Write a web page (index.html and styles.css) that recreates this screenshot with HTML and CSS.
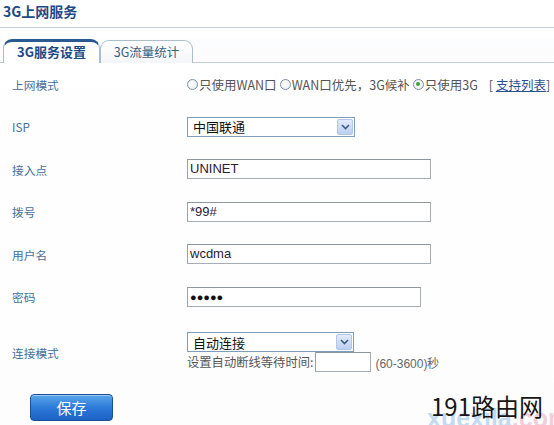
FILE: index.html
```html
<!DOCTYPE html>
<html lang="zh-CN">
<head>
<meta charset="utf-8">
<title>3G上网服务</title>
<link rel="stylesheet" href="styles.css">
</head>
<body>
<div class="page">
  <div class="title">3G上网服务</div>
  <div class="tabs">
    <div class="tab active">3G服务设置</div>
    <div class="tab">3G流量统计</div>
  </div>
  <div class="form">
    <div class="row">
      <div class="label">上网模式</div>
      <div class="ctrl radios">
        <span class="radio"></span><span class="rtext">只使用WAN口</span>
        <span class="radio"></span><span class="rtext">WAN口优先，3G候补</span>
        <span class="radio checked"></span><span class="rtext">只使用3G</span>
        <span class="bracket">[ <a class="link">支持列表</a>]</span>
      </div>
    </div>
    <div class="row">
      <div class="label">ISP</div>
      <div class="ctrl"><div class="select isp"><span class="stext">中国联通</span><span class="arrow"><svg width="9" height="6" viewBox="0 0 9 6"><path d="M1 1 L4.5 4.5 L8 1" fill="none" stroke="#3e5a8a" stroke-width="1.6"/></svg></span></div></div>
    </div>
    <div class="row">
      <div class="label">接入点</div>
      <div class="ctrl"><div class="input wide">UNINET</div></div>
    </div>
    <div class="row">
      <div class="label">拨号</div>
      <div class="ctrl"><div class="input wide">*99#</div></div>
    </div>
    <div class="row">
      <div class="label">用户名</div>
      <div class="ctrl"><div class="input wide">wcdma</div></div>
    </div>
    <div class="row">
      <div class="label">密码</div>
      <div class="ctrl"><div class="input pwd"><span class="dots">●●●●●</span></div></div>
    </div>
    <div class="row conn">
      <div class="label">连接模式</div>
      <div class="ctrl stack">
        <div class="select mode"><span class="stext">自动连接</span><span class="arrow"><svg width="9" height="6" viewBox="0 0 9 6"><path d="M1 1 L4.5 4.5 L8 1" fill="none" stroke="#3e5a8a" stroke-width="1.6"/></svg></span></div>
        <div class="wait"><span>设置自动断线等待时间:</span><div class="input small"></div><span class="range">(60-3600)秒</span></div>
      </div>
    </div>
  </div>
  <div class="actions"><button class="save">保存</button></div>
  <div class="watermark"><span class="wm-faint"><span class="wm-blue">xuexila</span><span class="wm-pink">.com</span></span><span class="wm-main">191路由网</span></div>
</div>
</body>
</html>
```
FILE: styles.css
```css
* { box-sizing: border-box; }
html, body { margin: 0; padding: 0; background: #fff; }
body {
  font-family: "Noto Sans CJK SC", "Liberation Sans", sans-serif;
  font-size: 12px;
  color: #333;
}
.page {
  position: relative;
  width: 554px;
  height: 425px;
  overflow: hidden;
  background: linear-gradient(#ffffff, #fdfdfe);
}
.title {
  height: 28px;
  padding-left: 3px;
  line-height: 22px;
  font-size: 14px;
  font-weight: bold;
  color: #1f4a86;
  border-bottom: 1px solid #c3cfd0;
}
.tabs {
  margin-top: 11px;
  height: 24px;
  padding-left: 3px;
  display: flex;
  align-items: flex-end;
  border-bottom: 1px solid #bfcfd4;
  background: linear-gradient(#fbfdff, #fefcfc);
}
.tab {
  height: 23px;
  width: 93px;
  margin-bottom: -1px;
  border: 1px solid #a9bfcc;
  border-bottom: none;
  border-radius: 9px 9px 0 0;
  background: linear-gradient(#ffffff, #f3f6f9);
  text-align: center;
  font-size: 12.5px;
  line-height: 22px;
  color: #3b5d80;
}
.tab.active {
  width: 97px;
  height: 24px;
  border-top: 3px solid #2a5890;
  font-weight: bold;
  font-size: 13px;
  line-height: 20px;
  color: #1d4a86;
  background: #fff;
}
.form { display: flex; flex-direction: column; }
.row {
  display: grid;
  grid-template-columns: 187px 1fr;
  align-items: center;
  height: 42.5px;
}
.label {
  padding-left: 12px;
  color: #46709a;
  font-size: 11.7px;
}
.ctrl { display: flex; align-items: center; }
.radios { font-size: 12.5px; color: #555; white-space: nowrap; }
.radio {
  display: inline-block;
  width: 11px;
  height: 11px;
  border: 1px solid #7b8fa2;
  border-radius: 50%;
  background: radial-gradient(circle at 40% 40%, #ffffff, #e4e9ee);
  margin-right: 1px;
  position: relative;
}
.radio.checked::after {
  content: "";
  position: absolute;
  left: 2.5px;
  top: 2.5px;
  width: 4px;
  height: 4px;
  border-radius: 50%;
  background: #3da13d;
}
.rtext { margin-right: 3px; }
.bracket { margin-left: 8px; color: #555; }
.link { color: #2a4f8e; text-decoration: underline; }
.select {
  height: 20px;
  border: 1px solid #7f9db9;
  display: flex;
  align-items: center;
  justify-content: space-between;
  padding: 1px 1px 1px 5px;
  background: #fff;
  font-size: 13px;
  color: #111;
}
.select.isp { width: 168px; }
.select.mode { width: 167px; }
.arrow {
  width: 16px;
  height: 16px;
  border: 1px solid #b4c6e6;
  border-radius: 2px;
  background: linear-gradient(#e2ebfa, #bccff0);
  display: flex;
  align-items: center;
  justify-content: center;
}
.input {
  height: 20px;
  border: 1px solid #a5acb2;
  border-top-color: #8f969c;
  border-left-color: #9aa1a7;
  background: #fff;
  font-family: "Liberation Sans", Arial, sans-serif;
  font-size: 13px;
  line-height: 18px;
  padding-left: 2px;
  color: #2c2030;
}
.input.wide { width: 244px; }
.input.pwd { width: 234px; }
.input.small { width: 56px; margin: 0 4px 0 2px; }
.dots { font-size: 11px; letter-spacing: 0px; color: #111; }
.row.conn { height: 54px; padding-top: 14px; align-items: center; }
.stack { flex-direction: column; align-items: flex-start; }
.wait { display: flex; align-items: center; color: #555; font-size: 12.3px; height: 20px; }
.range { font-family: "Liberation Sans", Arial, sans-serif; font-size: 12px; color: #666; }
.actions { margin-top: 22px; padding-left: 30px; }
.save {
  width: 83px;
  height: 27px;
  border: 1px solid #1c4f97;
  border-radius: 4px;
  background: linear-gradient(#5aa6ec 0%, #2d7ad9 50%, #1b62c4 100%);
  color: #fff;
  font-family: "Noto Sans CJK SC", sans-serif;
  font-size: 15px;
  line-height: 23px;
  padding: 0;
  box-shadow: inset 0 1px 0 rgba(255,255,255,0.4);
}
.watermark {
  position: absolute;
  left: 431px;
  top: 390px;
  width: 123px;
  height: 35px;
}
.wm-faint {
  position: absolute;
  left: -4px;
  top: 14px;
  font-family: "Liberation Sans", Arial, sans-serif;
  font-size: 25px;
  font-weight: bold;
  opacity: 0.35;
  white-space: nowrap;
}
.wm-blue { color: #5a9bd8; }
.wm-pink { color: #e07aa0; }
.wm-main {
  position: absolute;
  left: 0;
  top: 0;
  font-family: "Noto Sans CJK SC", sans-serif;
  font-size: 24px;
  line-height: 32px;
  color: #161616;
  white-space: nowrap;
}
```
